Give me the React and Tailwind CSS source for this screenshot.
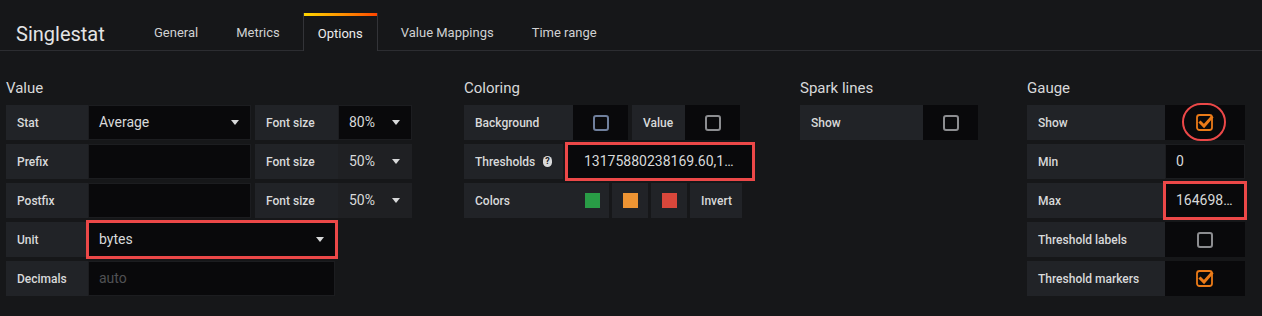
import { useState } from "react"
import { twMerge } from "tailwind-merge"

function Label({ children, className = "" }) {
    return (
        <div className={twMerge("h-[35px] flex items-center px-[11px] bg-[#212327] text-[12px] font-medium text-[#d8d9da] shrink-0", className)}>
            {children}
        </div>
    )
}

function Input({ children, className = "" }) {
    return (
        <div className={twMerge("h-[35px] flex items-center px-[10px] bg-[#09090b] border border-[#1c1d20] text-[14px] text-[#d8d9da] shrink-0", className)}>
            {children}
        </div>
    )
}

function Caret() {
    return <span className="w-0 h-0 border-x-[4px] border-x-transparent border-t-[5px] border-t-[#d8d9da]" />
}

function Select({ value, className = "" }) {
    return (
        <Input className={twMerge("justify-between pr-[11px]", className)}>
            <span>{value}</span>
            <Caret />
        </Input>
    )
}

function Checkbox({ checked, border = "border-[#8c8d90]" }) {
    if (checked) {
        return (
            <svg width="19" height="19" viewBox="0 0 19 19">
                <rect x="1" y="2" width="15" height="15" rx="2.5" fill="none" stroke="#eb7b18" strokeWidth="1.8" />
                <path d="M4.5 9.5 L8 13 L15.5 4.5" fill="none" stroke="#eb7b18" strokeWidth="3" strokeLinecap="square" />
            </svg>
        )
    }
    return <span className={"w-[16px] h-[16px] rounded-[3px] border-2 " + border} />
}

function CheckCell({ checked, border, className = "", children }) {
    return (
        <div className={"relative h-[35px] flex items-center justify-center bg-[#09090b] shrink-0 " + className}>
            <Checkbox checked={checked} border={border} />
            {children}
        </div>
    )
}

function Row({ children }) {
    return <div className="flex mb-[4px]">{children}</div>
}

function Title({ children }) {
    return <h3 className="text-[15px] leading-[18px] text-[#d8d9da] mb-[8px]">{children}</h3>
}

const tabs = ["General", "Metrics", "Options", "Value Mappings", "Time range"]

export default function App() {
    const [active] = useState("Options")
    return (
        <div className="w-[1262px] h-[316px] bg-[#161719] font-['Roboto','Liberation_Sans',sans-serif] overflow-hidden">
            <div className="h-[51px] flex items-end border-b border-[#2c2d31]">
                <div className="w-[139px] h-[38px] pl-[16px] pt-[5px] flex items-center text-[20px] text-[#e3e4e5]">Singlestat</div>
                <div className="flex items-end gap-[8px]">
                    {tabs.map((t) =>
                        t === active ? (
                            <div key={t} className="h-[38px] -mb-px flex flex-col border-x border-[#333438] bg-[#161719]">
                                <div className="h-[3px] bg-linear-to-r from-[#ffd500] to-[#ff4400]" />
                                <div className="flex-1 flex items-center px-[14px] pt-[1px] text-[13px] text-[#ececec]">{t}</div>
                            </div>
                        ) : (
                            <div key={t} className="h-[37px] flex items-center px-[15px] pt-[3px] text-[13px] text-[#d0d1d2]">{t}</div>
                        )
                    )}
                </div>
            </div>

            <div className="flex pt-[28px]">
                {/* Value */}
                <div className="ml-[6px] w-[406px]">
                    <Title>Value</Title>
                    <Row>
                        <Label className="w-[82px]">Stat</Label>
                        <Select value="Average" className="w-[163px]" />
                        <Label className="w-[83px] ml-[4px]">Font size</Label>
                        <Select value="80%" className="w-[74px]" />
                    </Row>
                    <Row>
                        <Label className="w-[82px]">Prefix</Label>
                        <Input className="w-[163px]" />
                        <Label className="w-[83px] ml-[4px]">Font size</Label>
                        <Select value="50%" className="w-[74px] bg-[#1f2023] border-[#1f2023]" />
                    </Row>
                    <Row>
                        <Label className="w-[82px]">Postfix</Label>
                        <Input className="w-[163px]" />
                        <Label className="w-[83px] ml-[4px]">Font size</Label>
                        <Select value="50%" className="w-[74px] bg-[#1f2023] border-[#1f2023]" />
                    </Row>
                    <Row>
                        <Label className="w-[82px]">Unit</Label>
                        <Select value="bytes" className="w-[248px] outline-3 outline-[#ec4848] -outline-offset-1" />
                    </Row>
                    <Row>
                        <Label className="w-[82px]">Decimals</Label>
                        <Input className="w-[247px] text-[#505154]">auto</Input>
                    </Row>
                </div>

                {/* Coloring */}
                <div className="ml-[52px] w-[292px]">
                    <Title>Coloring</Title>
                    <Row>
                        <Label className="w-[109px]">Background</Label>
                        <CheckCell className="w-[55px]" border="border-[#6f7f9c]" />
                        <Label className="w-[53px] ml-[4px]">Value</Label>
                        <CheckCell className="w-[55px]" />
                    </Row>
                    <Row>
                        <Label className="w-[99px] gap-[8px]">
                            Thresholds
                            <span className="w-[11px] h-[11px] rounded-full bg-[#d8d9da] text-[#161719] text-[9px] font-bold leading-none flex items-center justify-center">?</span>
                        </Label>
                        <Input className="w-[186px] ml-[4px] pl-[16px] outline-3 outline-[#ec4848] -outline-offset-1">13175880238169.60,1…</Input>
                    </Row>
                    <Row>
                        <Label className="w-[112px]">Colors</Label>
                        <div className="w-[33px] h-[35px] bg-[#212327] flex items-center justify-center">
                            <span className="w-[15px] h-[15px] bg-[#299c46]" />
                        </div>
                        <div className="w-[36px] h-[35px] ml-[3px] bg-[#212327] flex items-center justify-center">
                            <span className="w-[15px] h-[15px] bg-[#ed9433]" />
                        </div>
                        <div className="w-[36px] h-[35px] ml-[3px] bg-[#212327] flex items-center justify-center">
                            <span className="w-[15px] h-[15px] bg-[#d9473b]" />
                        </div>
                        <Label className="w-[52px] ml-[3px]">Invert</Label>
                    </Row>
                </div>

                {/* Spark lines */}
                <div className="ml-[44px] w-[178px]">
                    <Title>Spark lines</Title>
                    <Row>
                        <Label className="w-[123px]">Show</Label>
                        <CheckCell className="w-[55px]" />
                    </Row>
                </div>

                {/* Gauge */}
                <div className="ml-[49px] w-[218px]">
                    <Title>Gauge</Title>
                    <Row>
                        <Label className="w-[138px]">Show</Label>
                        <CheckCell checked className="w-[80px]">
                            <span className="absolute left-[17px] top-[-2px] w-[44px] h-[38px] rounded-full border-[2.5px] border-[#ec4848]" />
                        </CheckCell>
                    </Row>
                    <Row>
                        <Label className="w-[138px]">Min</Label>
                        <Input className="w-[80px]">0</Input>
                    </Row>
                    <Row>
                        <Label className="w-[138px]">Max</Label>
                        <Input className="w-[80px] outline-3 outline-[#ec4848] -outline-offset-1">164698…</Input>
                    </Row>
                    <Row>
                        <Label className="w-[138px]">Threshold labels</Label>
                        <CheckCell className="w-[80px]" />
                    </Row>
                    <Row>
                        <Label className="w-[138px]">Threshold markers</Label>
                        <CheckCell checked className="w-[80px]" />
                    </Row>
                </div>
            </div>
        </div>
    )
}
